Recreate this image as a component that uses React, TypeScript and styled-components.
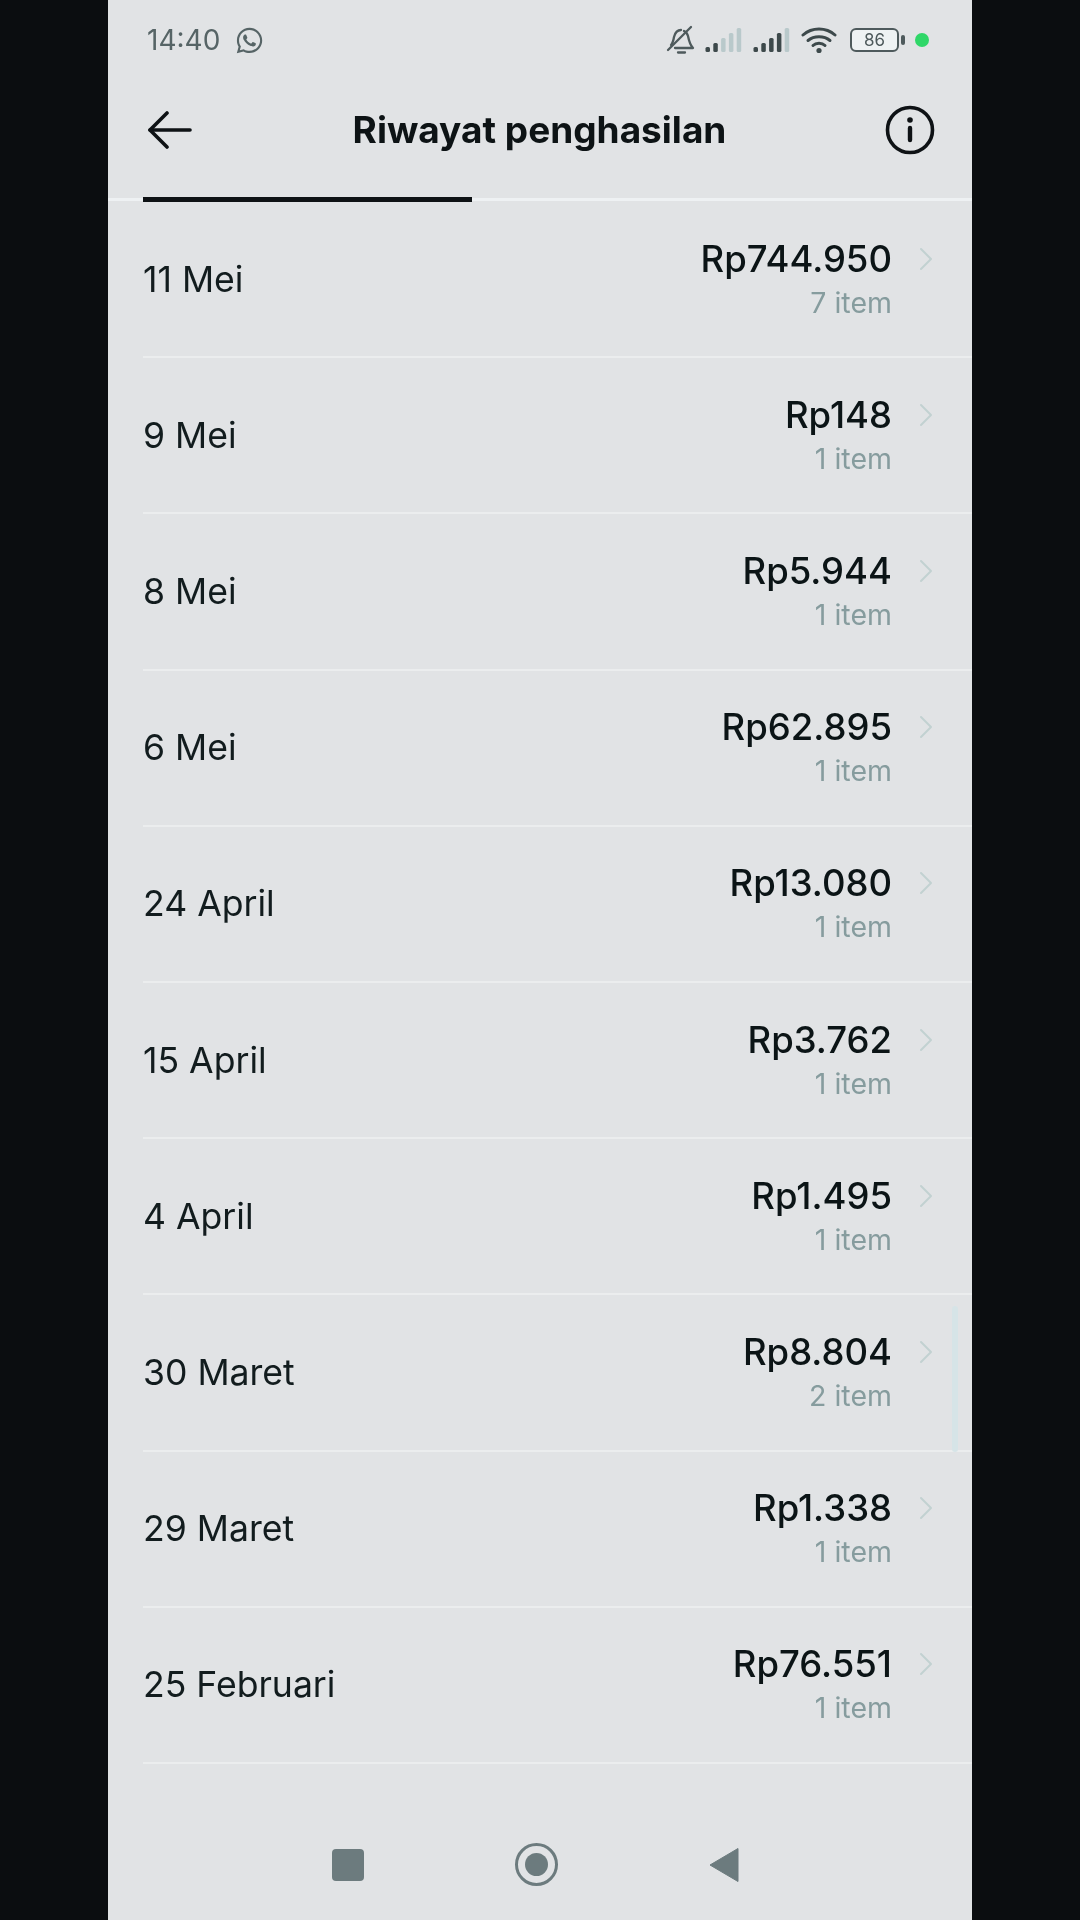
import React from 'react';
import styled, { createGlobalStyle } from 'styled-components';
import { FaWhatsapp } from 'react-icons/fa';

const GlobalStyle = createGlobalStyle`
    html, body {
        margin: 0;
        padding: 0;
        background: #0b0d10;
    }
    * {
        box-sizing: border-box;
    }
`

const Page = styled.div`
    width: 1080px;
    height: 1920px;
    display: flex;
    justify-content: center;
    background: #0b0d10;
    font-family: Inter, "Liberation Sans", sans-serif;
`

const Phone = styled.main`
    position: relative;
    width: 864px;
    height: 1920px;
    display: flex;
    flex-direction: column;
    background: #e1e3e5;
    overflow: hidden;
    filter: blur(0.5px);
`

const StatusBar = styled.div`
    height: 80px;
    padding: 0 43px 0 39px;
    display: flex;
    align-items: center;
    justify-content: space-between;
`

const StatusLeft = styled.div`
    display: flex;
    align-items: center;
    gap: 15px;
    color: #566466;
    font-size: 28px;
`

const StatusRight = styled.div`
    display: flex;
    align-items: center;
`

const Bell = styled.svg`
    width: 29px;
    height: 30px;
    margin-right: 10px;
`

const Signal = styled.svg`
    width: 37px;
    height: 24px;
    margin-right: 11px;
`

const Wifi = styled.svg`
    width: 36px;
    height: 27px;
    margin-right: 13px;
`

const Battery = styled.div`
    width: 49px;
    height: 24px;
    border: 2px solid #4e5a5c;
    border-radius: 6px;
    background: #eef2f3;
    color: #4e5a5c;
    font-size: 17px;
    line-height: 20px;
    text-align: center;
`

const BatteryCap = styled.div`
    width: 4px;
    height: 10px;
    margin: 0 10px 0 2px;
    border-radius: 2px;
    background: #4e5a5c;
`

const GreenDot = styled.div`
    width: 14px;
    height: 14px;
    border-radius: 50%;
    background: #2fd768;
`

const Header = styled.header`
    height: 118px;
    padding: 0 37px 19px 40px;
    display: flex;
    align-items: center;
`

const Title = styled.h1`
    flex: 1;
    margin: 0;
    text-align: center;
    font-size: 37px;
    font-weight: 700;
    color: #0d1315;
`

const TabTrack = styled.div`
    height: 3px;
    margin-bottom: 1px;
    background: #eef1f3;
    padding-left: 35px;
`

const TabIndicator = styled.div`
    width: 329px;
    height: 5px;
    margin-top: -1px;
    background: #0e1215;
`

const List = styled.ul`
    list-style: none;
    margin: 0;
    padding: 0;
`

const Row = styled.li`
    height: 156.2px;
    margin-left: 35px;
    padding-right: 39px;
    border-bottom: 2px solid #ebedee;
    display: flex;
    align-items: center;
    justify-content: space-between;
`

const DateText = styled.span`
    font-size: 35.6px;
    color: #121c1e;
`

const Values = styled.div`
    display: grid;
    grid-template-columns: auto 14px;
    column-gap: 27px;
    justify-items: end;
    align-items: center;
    row-gap: 4px;
    margin-bottom: 2px;
`

const Amount = styled.span`
    font-size: 36.5px;
    font-weight: 500;
    color: #0b1416;
`

const ItemCount = styled.span`
    grid-column: 1;
    font-size: 28.5px;
    color: #869c9e;
`

const Chevron = styled.svg`
    width: 14px;
    height: 24px;
`

const ScrollThumb = styled.div`
    position: absolute;
    top: 1306px;
    right: 14px;
    width: 6px;
    height: 146px;
    border-radius: 3px;
    background: #d6e4e7;
`

const NavBar = styled.nav`
    width: 407px;
    margin: auto 0 34px 224px;
    display: flex;
    align-items: center;
    justify-content: space-between;
`

const NavSquare = styled.div`
    width: 32px;
    height: 32px;
    border-radius: 4px;
    background: #6c7b7e;
`

const NavHome = styled.div`
    width: 43px;
    height: 43px;
    border: 3px solid #6c7b7e;
    border-radius: 50%;
    display: flex;
    align-items: center;
    justify-content: center;

    &::after {
        content: '';
        width: 23px;
        height: 23px;
        border-radius: 50%;
        background: #6c7b7e;
    }
`

const NavBack = styled.svg`
    width: 30px;
    height: 36px;
`

const rows = [
    { date: '11 Mei', amount: 'Rp744.950', items: '7 item' },
    { date: '9 Mei', amount: 'Rp148', items: '1 item' },
    { date: '8 Mei', amount: 'Rp5.944', items: '1 item' },
    { date: '6 Mei', amount: 'Rp62.895', items: '1 item' },
    { date: '24 April', amount: 'Rp13.080', items: '1 item' },
    { date: '15 April', amount: 'Rp3.762', items: '1 item' },
    { date: '4 April', amount: 'Rp1.495', items: '1 item' },
    { date: '30 Maret', amount: 'Rp8.804', items: '2 item' },
    { date: '29 Maret', amount: 'Rp1.338', items: '1 item' },
    { date: '25 Februari', amount: 'Rp76.551', items: '1 item' },
];

const SignalIcon = ({ active }: { active: number }) => (
    <Signal viewBox="0 0 37 24">
        {[0, 1, 2, 3, 4].map((i) => {
            const h = [5, 9, 14, 19, 24][i];
            return (
                <rect
                    key={i}
                    x={0.5 + i * 7.8}
                    y={24 - h}
                    width={4.5}
                    height={h}
                    rx={1.5}
                    fill={i < active ? '#3d494b' : '#b9c9cb'}
                />
            );
        })}
    </Signal>
);

const App = () => {
    return (
        <Page>
            <GlobalStyle />
            <Phone>
                <StatusBar>
                    <StatusLeft>
                        <span>14:40</span>
                        <FaWhatsapp size={29} color="#566466" />
                    </StatusLeft>
                    <StatusRight>
                        <Bell viewBox="0 0 29 30" fill="none" stroke="#4e5a5c" strokeWidth="2.3" strokeLinecap="round" strokeLinejoin="round">
                            <path d="M9 23h18c-3-3-4-7-5-12-.6-2.5-2-4-4-5" />
                            <path d="M15 5c-4 0-6 3-7 7-.5 3-1 6-3 8" />
                            <path d="M12 27.5h7" />
                            <path d="M2 25 25 2" />
                        </Bell>
                        <SignalIcon active={2} />
                        <SignalIcon active={4} />
                        <Wifi viewBox="0 0 36 27" fill="none" stroke="#3d494b" strokeLinecap="round">
                            <path d="M2 8c9-8 23-8 32 0" strokeWidth="3" />
                            <path d="M7 13.5c6-5 16-5 22 0" strokeWidth="3" />
                            <path d="M12 18.5c3-3 9-3 12 0" strokeWidth="3" />
                            <circle cx="18" cy="23.5" r="2.6" fill="#3d494b" stroke="none" />
                        </Wifi>
                        <Battery>86</Battery>
                        <BatteryCap />
                        <GreenDot />
                    </StatusRight>
                </StatusBar>

                <Header>
                    <svg width="46" height="38" viewBox="0 0 46 38" fill="none" stroke="#0e1215" strokeWidth="3.6" strokeLinecap="round" strokeLinejoin="round">
                        <path d="M2 19h40" />
                        <path d="M19 2 2 19l17 17" />
                    </svg>
                    <Title>Riwayat penghasilan</Title>
                    <svg width="50" height="50" viewBox="0 0 50 50" fill="none" stroke="#0e1215" strokeLinecap="round">
                        <circle cx="25" cy="25" r="22.5" strokeWidth="3.6" />
                        <circle cx="25" cy="15" r="2.8" fill="#0e1215" stroke="none" />
                        <path d="M25 23v12" strokeWidth="4.4" />
                    </svg>
                </Header>

                <TabTrack>
                    <TabIndicator />
                </TabTrack>

                <List>
                    {rows.map((row) => (
                        <Row key={row.date}>
                            <DateText>{row.date}</DateText>
                            <Values>
                                <Amount>{row.amount}</Amount>
                                <Chevron viewBox="0 0 14 24" fill="none" stroke="#c2d1d1" strokeWidth="2" strokeLinecap="round" strokeLinejoin="round">
                                    <path d="M2 2l10 10L2 22" />
                                </Chevron>
                                <ItemCount>{row.items}</ItemCount>
                            </Values>
                        </Row>
                    ))}
                </List>

                <ScrollThumb />

                <NavBar>
                    <NavSquare />
                    <NavHome />
                    <NavBack viewBox="0 0 30 36">
                        <path d="M29 1.5v33L1 18z" fill="#6c7b7e" stroke="#6c7b7e" strokeLinejoin="round" />
                    </NavBack>
                </NavBar>
            </Phone>
        </Page>
    );
};

export default App;
